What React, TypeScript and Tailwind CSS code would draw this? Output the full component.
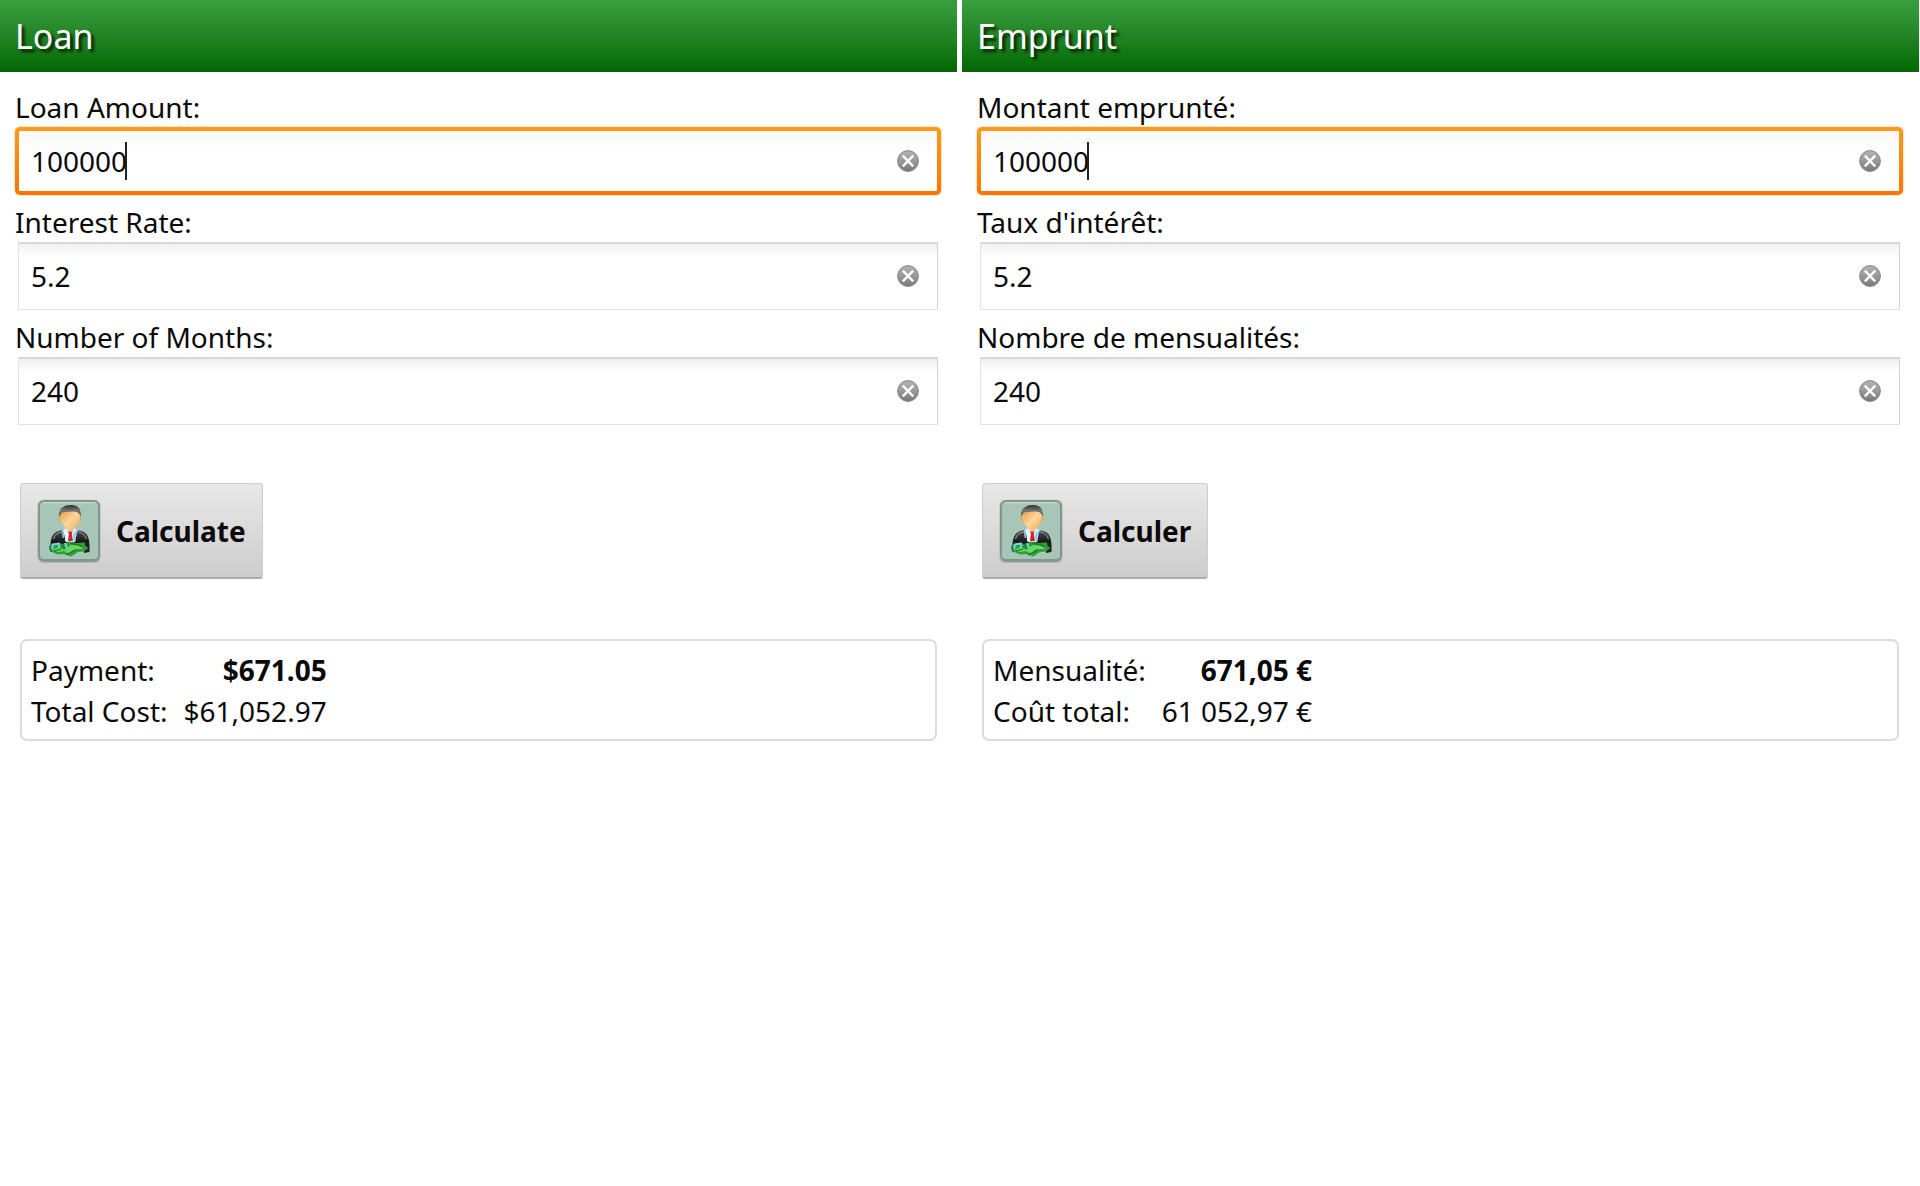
import { useId, useState } from "react";

type Row = { label: string; value: string };
type PanelData = {
  title: string;
  lang: string;
  fields: Row[];
  action: string;
  clear: string;
  payment: Row;
  total: Row;
};

const panels: PanelData[] = [
  {
    title: "Loan",
    lang: "en",
    fields: [
      { label: "Loan Amount:", value: "100000" },
      { label: "Interest Rate:", value: "5.2" },
      { label: "Number of Months:", value: "240" },
    ],
    action: "Calculate",
    clear: "Clear",
    payment: { label: "Payment:", value: "$671.05" },
    total: { label: "Total Cost:", value: "$61,052.97" },
  },
  {
    title: "Emprunt",
    lang: "fr",
    fields: [
      { label: "Montant emprunté:", value: "100000" },
      { label: "Taux d'intérêt:", value: "5.2" },
      { label: "Nombre de mensualités:", value: "240" },
    ],
    action: "Calculer",
    clear: "Effacer",
    payment: { label: "Mensualité:", value: "671,05 €" },
    total: { label: "Coût total:", value: "61 052,97 €" },
  },
];

function ClearIcon() {
  const id = useId();
  return (
    <svg viewBox="0 0 22 22" className="size-[22px]" aria-hidden="true">
      <defs>
        <linearGradient id={id} x1="0" y1="0" x2="0" y2="1">
          <stop offset="0" stopColor="#b4b4b4" />
          <stop offset="0.5" stopColor="#999999" />
          <stop offset="1" stopColor="#787878" />
        </linearGradient>
      </defs>
      <circle cx="11" cy="11" r="10.4" fill={`url(#${id})`} stroke="#858585" strokeWidth="1" />
      <path d="M5.800 5.600 16.200 16.400M16.200 5.600 5.800 16.400" stroke="#fff" strokeWidth="2.3" />
    </svg>
  );
}

function BankerIcon() {
  const id = useId();
  return (
    <svg viewBox="0 0 64 64" className="size-16" aria-hidden="true">
      <defs>
        <linearGradient id={`${id}f`} x1="0" y1="0" x2="1" y2="1">
          <stop offset="0" stopColor="#e5a043" />
          <stop offset="0.5" stopColor="#fbd69a" />
          <stop offset="1" stopColor="#f0a94a" />
        </linearGradient>
        <linearGradient id={`${id}h`} x1="0" y1="0" x2="0" y2="1">
          <stop offset="0" stopColor="#2c2c2c" />
          <stop offset="0.5" stopColor="#777" />
          <stop offset="1" stopColor="#333" />
        </linearGradient>
        <linearGradient id={`${id}s`} x1="0" y1="0" x2="0" y2="1">
          <stop offset="0" stopColor="#57575a" />
          <stop offset="0.5" stopColor="#1b1a1d" />
          <stop offset="1" stopColor="#242225" />
        </linearGradient>
        <filter id={`${id}b`} x="-10%" y="-10%" width="120%" height="125%">
          <feGaussianBlur stdDeviation="1" />
        </filter>
      </defs>
      <rect x="1.5" y="2" width="61" height="61" rx="5" fill="#5a665f" opacity="0.8" filter={`url(#${id}b)`} />
      <rect x="2" y="2" width="60" height="59" rx="5" fill="#a8c6b7" stroke="#82968b" strokeWidth="2" />
      <path d="M6 3.7H58" stroke="#c4dace" strokeWidth="1.2" />
      {/* suit and shirt */}
      <path d="M13.500 53C13 43 14 35 20 32.500L28 30H37L46 32.500C52 35 53 43 52.500 53L47 54V49H19V53Z" fill={`url(#${id}s)`} />
      <path d="M16.500 40Q18 34 25 33M49.500 40Q47.500 34 41 33" stroke="#8b8b90" strokeWidth="1.2" fill="none" />
      <path d="M26 30.500 33 28 40.500 30.500 38 43H29Z" fill="#dceefa" />
      <path d="M26 31 30 36 28.500 42" stroke="#fff" strokeWidth="1.6" fill="none" />
      <path d="M41 31 37 36 38 42M25.500 31 26.500 39" stroke="#86c4e8" strokeWidth="1.8" fill="none" />
      <path d="M31 32.500H35.500L34.700 35 36 42H31L32 35Z" fill="#d5212c" />
      {/* head */}
      <path d="M22 19Q21 16.500 23 17L24 22.500Q21.500 22.500 22 19ZM44 19Q45 16.500 43 17L42 22.500Q44.500 22.500 44 19Z" fill="#e9a247" />
      <path d="M23.500 14Q33 9 42.800 14V20Q41.500 27 36.500 29.500V31.500L33.500 32 30 31V29.500Q24.500 26 23.500 20Z" fill={`url(#${id}f)`} />
      <path d="M22.600 17.500Q21 11 25.500 8.500L29 6.500Q38 4.500 42 9Q44.500 12 43.500 17.500L42.300 14.500Q40 12 35 12.500Q28 13 24.500 13.500Z" fill={`url(#${id}h)`} />
      {/* banknotes */}
      <path d="M12 47 18 44 26 45 32 42.500 40 44 48 43.500 48.500 47 51.500 49 47 52.500 41 53 34 57.500 27 55 21 55.500 14 52.500Z" fill="#2f9e39" />
      <path d="M15 51 22 48 27 51 34 46 44 47 46 50 38 50 32 55 27 52 21 53Z" fill="#68d860" />
      <path d="M33 44.500 41 45.500 45 48M17 52 24 50M29 56 38 51" stroke="#167125" strokeWidth="1.2" fill="none" />
      <path d="M15.500 50V45.500L22 44.500V49M28 44 30 49" stroke="#78d6ed" strokeWidth="1.800" fill="none" />
      <path d="M13 47V51M25 44.500 27 49" stroke="#176d5c" strokeWidth="1.300" fill="none" />
    </svg>
  );
}

function Field({ row, active, clear }: { row: Row; active: boolean; clear: string }) {
  const id = useId();
  const [value, setValue] = useState(row.value);
  return (
    <div className="h-[115px]">
      <label htmlFor={id} className="flex h-[47px] items-center pt-1.5">
        {row.label}
      </label>
      {active ? (
        <div className="h-[68px] rounded-[5px] bg-linear-to-b from-[#fe9a1c] to-[#fb7400] p-1 shadow-[0_0_2px_#f9a030]">
          <div className="flex h-full items-center rounded-[1px] bg-linear-to-b from-[#f9f9f9] to-white to-40% pr-[18px] pl-3">
            <input
              id={id}
              value={value}
              onChange={(e) => setValue(e.target.value)}
              inputMode="decimal"
              className="field-sizing-content bg-transparent caret-transparent outline-none"
            />
            <span className="-ml-0.5 h-[38px] w-0.5 bg-[#222]" />
            <button type="button" aria-label={`${clear} ${row.label}`} onClick={() => setValue("")} className="ml-auto">
              <ClearIcon />
            </button>
          </div>
        </div>
      ) : (
        <div className="mr-[3px] ml-[3px] flex h-[68px] items-center border border-t-2 border-[#e2e2e2] border-t-[#d8d8d8] border-r-[#d2d2d2] bg-linear-to-b from-[#f0f0f0] to-white to-20% pr-[18px] pb-0.5 pl-3">
          <input
            id={id}
            value={value}
            onChange={(e) => setValue(e.target.value)}
            inputMode="decimal"
            className="min-w-0 flex-1 bg-transparent outline-none"
          />
          <button type="button" aria-label={`${clear} ${row.label}`} onClick={() => setValue("")}>
            <ClearIcon />
          </button>
        </div>
      )}
    </div>
  );
}

function Panel({ data }: { data: PanelData }) {
  return (
    <section lang={data.lang} className="min-w-0 flex-1">
      <header className="flex h-[72px] items-center border-b border-[#1d541d] bg-linear-to-b from-[#3a9f3e] to-[#006a00] px-[15px] pt-0.5">
        <h1 className="text-[34px] text-white [text-shadow:3px_3px_3px_rgba(0,0,0,0.75)]">{data.title}</h1>
      </header>
      <form className="pt-2 pr-4 pl-[15px]" onSubmit={(e) => e.preventDefault()}>
        {data.fields.map((row, i) => (
          <Field key={row.label} row={row} active={i === 0} clear={data.clear} />
        ))}
        <button
          type="submit"
          className="mt-[58px] ml-[5px] flex h-24 items-center gap-[15px] rounded-[3px] border border-b-2 border-[#cdcdcd] border-b-[#adadad] bg-linear-to-b from-[#e8e8e8] to-[#cdcdcd] pr-4 pl-4 font-bold"
        >
          <BankerIcon />
          {data.action}
        </button>
        <div className="mt-[60px] mr-1 ml-[5px] rounded-[7px] border-2 border-[#dcdcdc] px-[9px] pt-[9px] pb-[7px]">
          <table className="leading-[41px]">
            <tbody>
              <tr>
                <th scope="row" className="pr-4 text-left font-normal">{data.payment.label}</th>
                <td className="text-right font-bold">{data.payment.value}</td>
              </tr>
              <tr>
                <th scope="row" className="pr-4 text-left font-normal">{data.total.label}</th>
                <td className="text-right">{data.total.value}</td>
              </tr>
            </tbody>
          </table>
        </div>
      </form>
    </section>
  );
}

export default function App() {
  return (
    <main className="flex min-h-screen gap-[5px] bg-white pr-px font-['Noto_Sans',sans-serif] text-[28px] text-[#0a0a0a]">
      {panels.map((p) => (
        <Panel key={p.lang} data={p} />
      ))}
    </main>
  );
}
